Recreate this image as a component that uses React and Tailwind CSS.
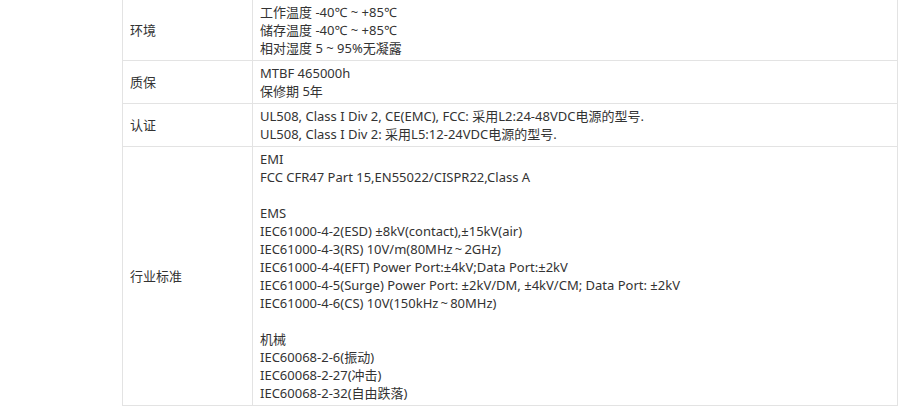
const rows = [
  {
    label: '环境',
    lines: ['工作温度 -40℃ ~ +85℃', '储存温度 -40℃ ~ +85℃', '相对湿度 5 ~ 95%无凝露'],
  },
  {
    label: '质保',
    lines: ['MTBF 465000h', '保修期 5年'],
  },
  {
    label: '认证',
    lines: [
      'UL508, Class I Div 2, CE(EMC), FCC: 采用L2:24-48VDC电源的型号.',
      'UL508, Class I Div 2: 采用L5:12-24VDC电源的型号.',
    ],
  },
  {
    label: '行业标准',
    lines: [
      'EMI',
      'FCC CFR47 Part 15,EN55022/CISPR22,Class A',
      '',
      'EMS',
      'IEC61000-4-2(ESD) ±8kV(contact),±15kV(air)',
      'IEC61000-4-3(RS) 10V/m(80MHz\u2009~\u20092GHz)',
      'IEC61000-4-4(EFT) Power Port:±4kV;Data Port:±2kV',
      'IEC61000-4-5(Surge) Power Port: ±2kV/DM, ±4kV/CM; Data Port: ±2kV',
      'IEC61000-4-6(CS) 10V(150kHz\u2009~\u200980MHz)',
      '',
      '机械',
      'IEC60068-2-6(振动)',
      'IEC60068-2-27(冲击)',
      'IEC60068-2-32(自由跌落)',
    ],
  },
];

export default function App() {
  return (
    <div
      className="w-[898px] h-[408px] bg-white overflow-hidden text-[13px] leading-[18px] text-[#333]"
      style={{ fontFamily: '"Noto Sans", "Noto Sans CJK SC", sans-serif' }}
    >
      <div className="ml-[122px] w-[776px] border-x border-b border-[#e3e3e3]">
        {rows.map((row, i) => (
          <div key={row.label} className={`flex ${i > 0 ? 'border-t border-[#e3e3e3]' : ''}`}>
            <div className="w-[129px] shrink-0 flex items-center pl-[7px]">{row.label}</div>
            <div className="flex-1 border-l border-[#e3e3e3] pl-[7px] pt-[3px] pb-[3px]">
              {row.lines.map((line, j) => (
                <div key={j} className="h-[18px] whitespace-nowrap">{line}</div>
              ))}
            </div>
          </div>
        ))}
      </div>
    </div>
  );
}
